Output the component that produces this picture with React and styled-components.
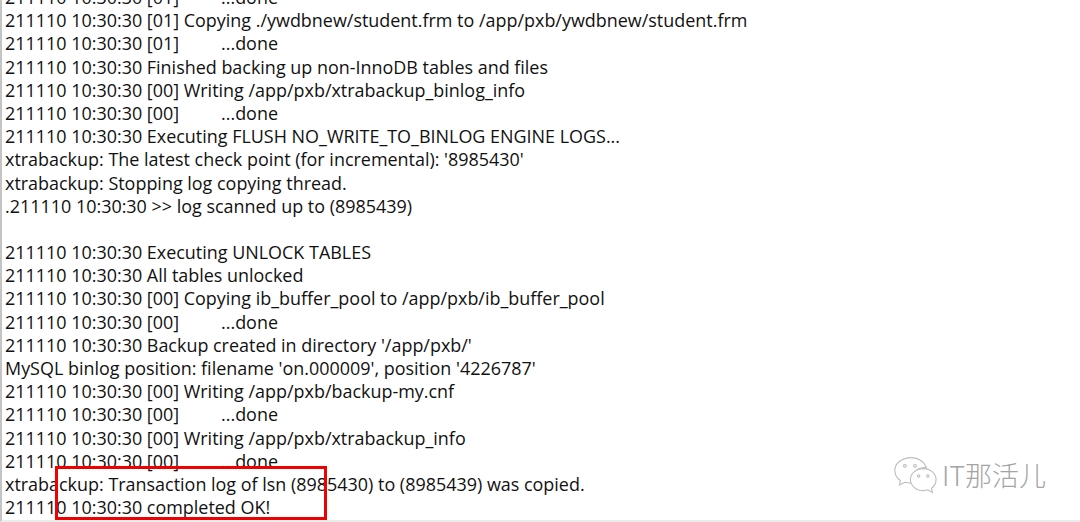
import React from "react";
import styled, { createGlobalStyle } from "styled-components";

const Global = createGlobalStyle`
  html, body { margin: 0; padding: 0; background: #fff; }
  body { width: 1080px; height: 522px; overflow: hidden; }
`;

const Screen = styled.div`
  position: relative;
  width: 1080px;
  height: 522px;
  overflow: hidden;
  background: #fff;
  box-sizing: border-box;
  border-left: 2px solid #c4c4c4;
  border-bottom: 2px solid #ececec;
`;

const Log = styled.div`
  margin-top: -14px;
  padding-left: 3px;
  font-family: "Open Sans", "Noto Sans", sans-serif;
  font-size: 17.95px;
  line-height: 23.2px;
  color: #111;
  white-space: pre;
`;

const Line = styled.div`
  height: 23.2px;
`;

const Highlight = styled.div`
  position: absolute;
  left: 53px;
  top: 466px;
  width: 272px;
  height: 54px;
  border: 3px solid #f00000;
  box-sizing: border-box;
`;

const Watermark = styled.div`
  position: absolute;
  left: 891px;
  top: 453px;
  display: flex;
  align-items: center;
  gap: 5px;
  color: #a4a4a4;
  font-family: "Noto Sans CJK SC", sans-serif;
  font-size: 27px;
  font-weight: 300;
  line-height: 44px;
`;

const lines = [
  "211110 10:30:30 [01]         ...done",
  "211110 10:30:30 [01] Copying ./ywdbnew/student.frm to /app/pxb/ywdbnew/student.frm",
  "211110 10:30:30 [01]         ...done",
  "211110 10:30:30 Finished backing up non-InnoDB tables and files",
  "211110 10:30:30 [00] Writing /app/pxb/xtrabackup_binlog_info",
  "211110 10:30:30 [00]         ...done",
  "211110 10:30:30 Executing FLUSH NO_WRITE_TO_BINLOG ENGINE LOGS...",
  "xtrabackup: The latest check point (for incremental): '8985430'",
  "xtrabackup: Stopping log copying thread.",
  ".211110 10:30:30 >> log scanned up to (8985439)",
  "",
  "211110 10:30:30 Executing UNLOCK TABLES",
  "211110 10:30:30 All tables unlocked",
  "211110 10:30:30 [00] Copying ib_buffer_pool to /app/pxb/ib_buffer_pool",
  "211110 10:30:30 [00]         ...done",
  "211110 10:30:30 Backup created in directory '/app/pxb/'",
  "MySQL binlog position: filename 'on.000009', position '4226787'",
  "211110 10:30:30 [00] Writing /app/pxb/backup-my.cnf",
  "211110 10:30:30 [00]         ...done",
  "211110 10:30:30 [00] Writing /app/pxb/xtrabackup_info",
  "211110 10:30:30 [00]         ...done",
  "xtrabackup: Transaction log of lsn (8985430) to (8985439) was copied.",
  "211110 10:30:30 completed OK!",
];

function WechatMark() {
  return (
    <svg width="44" height="38" viewBox="0 0 48 40" fill="#fff" stroke="#bdbdbd" strokeWidth="1.2">
      <path d="M20 1C10 1 2 7 2 15c0 4.500 2.500 8.500 6 11l-1 5 6-3c2 .6 4 .8 6 .8 1 0 2 0 3-.2-.8-1.800-1-3-1-4.600 0-7 6.500-12 14-12 .6 0 1 0 1.500.1C34.500 6 28 1 20 1z" />
      <path d="M33 13c-8 0-14 5.500-14 12s6 12 14 12c1.800 0 3.500-.3 5-.8l5 2.800-1-4.500c3-2.300 5-5.700 5-9.500 0-6.500-6-12-14-12z" />
      <circle cx="13" cy="10" r="1.500" />
      <circle cx="24" cy="10" r="1.500" />
      <circle cx="28" cy="21" r="1.300" />
      <circle cx="38" cy="21" r="1.300" />
    </svg>
  );
}

export default function App() {
  return (
    <Screen>
      <Global />
      <Log>
        {lines.map((text, i) => (
          <Line key={i}>{text}</Line>
        ))}
      </Log>
      <Highlight />
      <Watermark>
        <WechatMark />
        <span>IT那活儿</span>
      </Watermark>
    </Screen>
  );
}
